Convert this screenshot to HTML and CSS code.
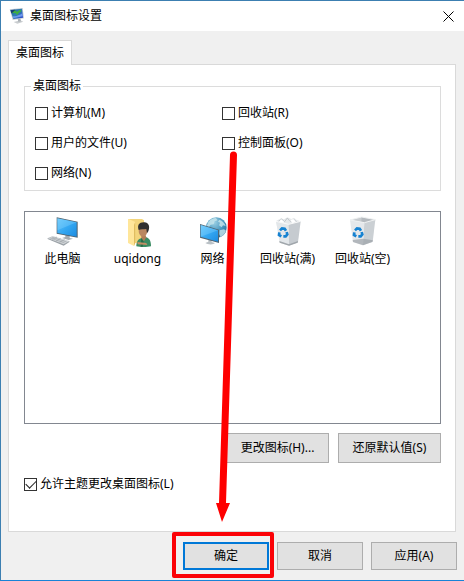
FILE: index.html
```html
<!DOCTYPE html>
<html lang="zh-CN">
<head>
    <meta charset="UTF-8">
    <meta name="viewport" content="width=device-width, initial-scale=1.0">
    <title>桌面图标设置</title>
    <link rel="stylesheet" href="styles.css">
</head>
<body>
    <div class="dialog">
        <header class="titlebar">
            <svg class="app-icon" viewBox="0 0 48 48" aria-hidden="true">
                <defs>
                    <linearGradient id="desk" x1="0" y1="0" x2="1" y2="1">
                        <stop offset="0" stop-color="#1d5fa8"/>
                        <stop offset=".5" stop-color="#2f7fb0"/>
                        <stop offset="1" stop-color="#2c3fd0"/>
                    </linearGradient>
                </defs>
                <path d="M14 42l20-5 9 4-18 6z" fill="#c9cdd0"/>
                <path d="M26 32l8-1 2 9-8 1z" fill="#a9afb4"/>
                <path d="M2 4l39-4 4 31-34 5z" fill="#c4cbd2"/>
                <path d="M4 6l35-4 3 27-29 4z" fill="url(#desk)"/>
                <path d="M5 7l13-2 3 8-14 3z" fill="#163f70"/>
                <path d="M9 15l9-8 6 4 9-6 5 4-9 6-4 6-5-5z" fill="#3fae3f"/>
                <path d="M11 24c8 3 19-2 29-8l1 9-28 6z" fill="#83a9ff" opacity=".75"/>
            </svg>
            <h1>桌面图标设置</h1>
            <button class="close" aria-label="关闭">
                <svg viewBox="0 0 11 11" aria-hidden="true"><path d="M.5.5l10 10M10.5.5l-10 10"/></svg>
            </button>
        </header>

        <main>
            <div class="tabs" role="tablist">
                <button class="tab" id="tab-icons" role="tab" aria-selected="true" aria-controls="panel-icons">桌面图标</button>
            </div>
            <section class="panel" id="panel-icons" role="tabpanel" aria-labelledby="tab-icons">
                <fieldset>
                    <legend>桌面图标</legend>
                    <div class="options">
                        <label><input type="checkbox">计算机(M)</label>
                        <label><input type="checkbox">回收站(R)</label>
                        <label><input type="checkbox">用户的文件(U)</label>
                        <label><input type="checkbox">控制面板(O)</label>
                        <label><input type="checkbox">网络(N)</label>
                    </div>
                </fieldset>

                <ul class="icon-list">
                    <li>
                        <svg viewBox="0 0 96 96" aria-hidden="true">
                            <defs>
                                <linearGradient id="screen" x1="0" y1="0" x2="1" y2="1">
                                    <stop offset="0" stop-color="#68c8fb"/>
                                    <stop offset=".5" stop-color="#35a8f2"/>
                                    <stop offset="1" stop-color="#1c8be0"/>
                                </linearGradient>
                            </defs>
                            <path d="M55 55l13 3v8l10 2-13 4-20-6 10-3z" fill="#a5acb1"/>
                            <path d="M29 4l63 13v48L29 53z" fill="#50616d"/>
                            <path d="M31 7l58 12v43L31 51z" fill="url(#screen)"/>
                            <path d="M31 7l58 12-58 24z" fill="#8bd6ff" opacity=".35"/>
                            <path d="M2 66l16-6 49 15-17 12z" fill="#d3d7da"/>
                            <path d="M2 66l48 19 17-10v3L50 89 2 69z" fill="#9aa1a6"/>
                            <path d="M8 65l45 16M14 63l45 15M16 70l14-7M27 75l14-8M38 79l15-8" stroke="#9fa5a9" stroke-width="2" fill="none"/>
                        </svg>
                        此电脑
                    </li>
                    <li>
                        <svg viewBox="0 0 96 96" aria-hidden="true">
                            <path d="M18 9h42l6 4v68H18z" fill="#f3d57c"/>
                            <path d="M20 9l20 9v62l-4 10-18-9V9z" fill="#ffe69a"/>
                            <path d="M36 26l4-8v62l-4 10z" fill="#e0bd60"/>
                            <path d="M43 91c0-14 5-22 16-25l14-2c10 3 14 12 14 27-12 3-32 3-44 0z" fill="#3b8c63"/>
                            <path d="M58 66l8 10 7-12-3-8H58z" fill="#b17d57"/>
                            <path d="M58 66l7 11-3 15h-6z" fill="#266b49"/>
                            <ellipse cx="63" cy="45" rx="13" ry="17" fill="#ba8760"/>
                            <path d="M50 42c-5-15 2-24 17-23 13 1 18 12 12 27l-4 6-2-13c-9 2-17 0-23 3z" fill="#303030"/>
                            <path d="M46 78l27 3 3 6-29-2z" fill="#c28d64"/>
                        </svg>
                        uqidong
                    </li>
                    <li>
                        <svg viewBox="0 0 96 96" aria-hidden="true">
                            <defs>
                                <radialGradient id="globe" cx=".4" cy=".25" r=".75">
                                    <stop offset="0" stop-color="#9bd0e4"/>
                                    <stop offset=".6" stop-color="#4a97bf"/>
                                    <stop offset="1" stop-color="#276c99"/>
                                </radialGradient>
                            </defs>
                            <circle cx="58" cy="35" r="31" fill="url(#globe)"/>
                            <path d="M34 18c7-9 15-12 23-12l5 7-9 3-3 9-9 1-6 8-6-4zM67 11c9 3 16 10 19 19l-8-2-4 6-8-6 3-8-6-3zM68 43l13-3 6 4c-3 9-9 15-17 19l-3-9z" fill="#c9e6ec" opacity=".8"/>
                            <path d="M34 68l10 3v7l10 3c-4 6-23 5-29 0l9-4z" fill="#b9c0c5"/>
                            <path d="M9 24l57 17v40L9 65z" fill="#526572"/>
                            <path d="M11 27l52 16v34L11 62z" fill="url(#screen)"/>
                            <path d="M11 27l52 16-52 19z" fill="#8bd6ff" opacity=".35"/>
                        </svg>
                        网络
                    </li>
                    <li>
                        <svg viewBox="0 0 96 96" aria-hidden="true">
                            <path d="M12 15l15-8 9 3 10-6 12 5 8-4 8 7 12 4-5 14-31 8-35-8z" fill="#e6e9eb"/>
                            <path d="M18 17l11-8 9 8 8-11 8 10 13-5 9 9" fill="none" stroke="#b4babf" stroke-width="2"/>
                            <path d="M27 10l9 7-3 6-12-4zM55 13l9-4 7 8-9 5z" fill="#fff"/>
                            <path d="M12 16l38 9 1 64-28-9z" fill="#e3e7ea"/>
                            <path d="M50 25l36-9-8 63-27 10z" fill="#c6cbd0"/>
                            <path d="M12 16l38 9 36-9" fill="none" stroke="#fafafa" stroke-width="3"/>
                            <path d="M22 75l29 10 27-10-1 5-26 9-28-9z" fill="#a0a6ab"/>
                            <g id="recycle" fill="none" stroke="#1682d1" stroke-width="8">
                                <path d="M24 43l6-6 8 1 4 6"/>
                                <path d="M44 48l2 7-5 6h-7"/>
                                <path d="M28 61l-7-4 1-8"/>
                            </g>
                        </svg>
                        回收站(满)
                    </li>
                    <li>
                        <svg viewBox="0 0 96 96" aria-hidden="true">
                            <path d="M9 12l35-9 41 8-33 9z" fill="#c8ccd0"/>
                            <path d="M44 4l-1 13 9 3 33-9z" fill="#b5babf"/>
                            <path d="M9 12l43 8-4 68-30-10z" fill="#e5e8eb"/>
                            <path d="M52 20l33-9-8 66-29 11z" fill="#cbd0d4"/>
                            <path d="M9 12l35-9 41 8-33 9z" fill="none" stroke="#eff1f2" stroke-width="3"/>
                            <path d="M17 72l32-4 29 5-2 5-28 10-30-10z" fill="#969da3" opacity=".65"/>
                            <use href="#recycle"/>
                        </svg>
                        回收站(空)
                    </li>
                </ul>

                <div class="icon-actions">
                    <button class="btn">更改图标(H)...</button>
                    <button class="btn">还原默认值(S)</button>
                </div>

                <label class="allow"><input type="checkbox" checked>允许主题更改桌面图标(L)</label>
            </section>
        </main>

        <footer>
            <div class="confirm">
                <button class="btn default">确定</button>
                <span class="highlight"></span>
            </div>
            <button class="btn">取消</button>
            <button class="btn">应用(A)</button>
        </footer>

        <!-- arrow from the control panel option down to the OK button -->
        <svg class="arrow" viewBox="0 0 20 372" aria-hidden="true">
            <path d="M15 5a3 3 0 0 1 7 0L11 353h4L7 372 1 353h3z"/>
        </svg>
    </div>
</body>
</html>
```

FILE: styles.css
```css
* {
    box-sizing: border-box;
}
body {
    margin: 0;
    font-family: "Noto Sans", "Noto Sans CJK SC", sans-serif;
    font-size: 12px;
    line-height: 18px;
    color: #000;
    background-color: #f0f0f0;
}
button {
    font: inherit;
    color: inherit;
}
.dialog {
    position: relative;
    display: flex;
    flex-direction: column;
    min-height: 100vh;
    border: 1px solid #3c7fb1;
    border-right: none;
    border-bottom-color: #1883d7;
}
.titlebar {
    display: flex;
    align-items: center;
    height: 30px;
    padding: 0 10px 0 8px;
    background-color: #fff;
}
.titlebar h1 {
    flex: 1;
    margin: 0;
    font-size: 12px;
    font-weight: normal;
}
.app-icon {
    width: 16px;
    height: 16px;
    margin-right: 5px;
}
.close {
    display: flex;
    padding: 0;
    border: none;
    background: none;
}
.close svg {
    width: 11px;
    height: 11px;
    fill: none;
    stroke: #000;
}
main {
    flex: 1;
    display: flex;
    flex-direction: column;
    padding: 9px 8px 0 7px;
}
.tabs {
    display: flex;
}
.tab {
    z-index: 1;
    height: 25px;
    margin-bottom: -1px;
    padding: 0 7px;
    border: 1px solid #d9d9d9;
    border-bottom: none;
    background-color: #fff;
}
.panel {
    flex: 1;
    padding: 12px 14px 0 15px;
    border: 1px solid #d9d9d9;
    background-color: #fff;
}
fieldset {
    margin: 0;
    padding: 10px;
    padding-top: 9px;
    height: 114px;
    border: 1px solid #dcdcdc;
}
legend {
    margin-left: -4px;
    padding: 0 2px;
}
.options {
    display: grid;
    grid-template-columns: 187px 1fr;
    row-gap: 12px;
}
label {
    display: flex;
    align-items: center;
}
input[type="checkbox"] {
    appearance: none;
    width: 13px;
    height: 13px;
    margin: 0 3px 0 0;
    border: 1px solid #333;
    background-color: #fff;
}
input[type="checkbox"]:checked::before {
    content: "";
    display: block;
    width: 9px;
    height: 5px;
    margin: 2px 1px;
    border: solid #222;
    border-width: 0 0 1px 1px;
    transform: translateY(-1px) rotate(-45deg);
}
.icon-list {
    display: flex;
    align-items: flex-start;
    height: 213px;
    margin: 20px 0 9px;
    padding: 4px 0 0;
    list-style: none;
    border: 1px solid #828790;
}
.icon-list li {
    display: flex;
    flex-direction: column;
    align-items: center;
    width: 75px;
    white-space: nowrap;
}
.icon-list svg {
    width: 32px;
    height: 32px;
    margin-bottom: 2px;
}
.icon-actions {
    display: flex;
    justify-content: flex-end;
    gap: 9px;
}
.btn {
    height: 28px;
    padding: 0;
    border: 1px solid #adadad;
    background-color: #e1e1e1;
}
.icon-actions .btn {
    width: 103px;
    height: 30px;
}
.allow {
    margin-top: 12px;
}
footer {
    display: flex;
    justify-content: flex-end;
    gap: 8px;
    padding: 10px 7px;
}
footer .btn {
    width: 86px;
}
.confirm {
    position: relative;
    display: flex;
}
.btn.default {
    border: 2px solid #0078d7;
}
.highlight {
    position: absolute;
    inset: -10px -5px -8px -11px;
    border: 4px solid #fb0207;
    border-radius: 2px;
    pointer-events: none;
}
.arrow {
    position: absolute;
    top: 149px;
    left: 214px;
    width: 20px;
    height: 372px;
    overflow: visible;
    fill: #fe0000;
    pointer-events: none;
}
```
